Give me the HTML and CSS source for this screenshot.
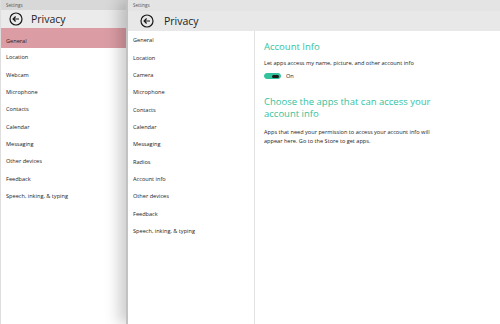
FILE: index.html
```html
<!DOCTYPE html>
<html>
<head lang="en">
    <meta charset="UTF-8">
    <title>Settings - Privacy</title>
    <link rel="stylesheet" href="styles.css">
</head>
<body>
    <div class="desk">
        <!-- window behind -->
        <div class="win back">
            <div class="titlebar">Settings</div>
            <div class="header">
                <svg class="backbtn" width="14" height="14" viewBox="0 0 14 14">
                    <circle cx="7" cy="7" r="6" fill="none" stroke="#1a1a1a" stroke-width="1.2"/>
                    <path d="M10 7H4.2M6.6 4.5L4.1 7l2.5 2.5" fill="none" stroke="#1a1a1a" stroke-width="1.2"/>
                </svg>
                <span class="title">Privacy</span>
            </div>
            <ul class="nav">
                <li class="active">General</li>
                <li>Location</li>
                <li>Webcam</li>
                <li>Microphone</li>
                <li>Contacts</li>
                <li>Calendar</li>
                <li>Messaging</li>
                <li>Other devices</li>
                <li>Feedback</li>
                <li>Speech, inking, &amp; typing</li>
            </ul>
        </div>

        <!-- window in front -->
        <div class="win front">
            <div class="titlebar">Settings</div>
            <div class="header">
                <svg class="backbtn" width="14" height="14" viewBox="0 0 14 14">
                    <circle cx="7" cy="7" r="6" fill="none" stroke="#1a1a1a" stroke-width="1.2"/>
                    <path d="M10 7H4.2M6.6 4.5L4.1 7l2.5 2.5" fill="none" stroke="#1a1a1a" stroke-width="1.2"/>
                </svg>
                <span class="title">Privacy</span>
            </div>
            <div class="body">
                <ul class="nav">
                    <li>General</li>
                    <li>Location</li>
                    <li>Camera</li>
                    <li>Microphone</li>
                    <li>Contacts</li>
                    <li>Calendar</li>
                    <li>Messaging</li>
                    <li>Radios</li>
                    <li>Account info</li>
                    <li>Other devices</li>
                    <li>Feedback</li>
                    <li>Speech, inking, &amp; typing</li>
                </ul>
                <div class="content">
                    <h2>Account Info</h2>
                    <p class="label">Let apps access my name, picture, and other account info</p>
                    <div class="toggle-row">
                        <span class="toggle"><span class="knob"></span></span>
                        <span>On</span>
                    </div>
                    <h2 class="second">Choose the apps that can access your account info</h2>
                    <p class="desc">Apps that need your permission to access your account info will appear here. Go to the Store to get apps.</p>
                </div>
            </div>
        </div>
    </div>
</body>
</html>
```

FILE: styles.css
```css
* {
    margin: 0;
    padding: 0;
    box-sizing: border-box;
}
html, body {
    width: 500px;
    height: 324px;
    overflow: hidden;
    background: #fff;
}
body {
    font-family: "Open Sans", "Noto Sans", sans-serif;
    color: #222;
}
.desk {
    display: flex;
    height: 324px;
}
.win {
    display: flex;
    flex-direction: column;
    background: #fff;
}
.back {
    width: 126px;
    border-left: 1px solid #dedede;
}
.front {
    flex: 1;
    border-left: 2px solid #c2c2c2;
    box-shadow: -7px 0 14px rgba(0, 0, 0, 0.2);
    z-index: 1;
}
.titlebar {
    height: 10px;
    padding-left: 5px;
    font-size: 4.5px;
    line-height: 10px;
    color: #555;
}
.back .titlebar {
    background: #d8d8d8;
}
.front .titlebar {
    height: 11px;
    line-height: 11px;
    background: #e4e4e4;
}
.header {
    display: flex;
    align-items: center;
    background: #ebebeb;
}
.back .header {
    height: 18px;
    padding-left: 8px;
}
.front .header {
    height: 20px;
    padding-left: 12px;
    background: #e8e8e8;
}
.backbtn {
    flex: none;
}
.title {
    font-size: 10.5px;
    margin-left: 8px;
    color: #222;
}
.front .title {
    margin-left: 10px;
}
.nav {
    list-style: none;
}
.nav li {
    height: 17.33px;
    line-height: 17.33px;
    padding-left: 5px;
    font-size: 5.6px;
    color: #222;
    white-space: nowrap;
}
.nav li.active {
    height: 20px;
    line-height: 26px;
    margin-bottom: 1.33px;
    background: #dc9ca4;
}
.body {
    flex: 1;
    display: flex;
}
.front .nav {
    width: 127px;
    padding-top: 1.33px;
    border-right: 1px solid #e3e3e3;
}
.content {
    flex: 1;
    padding: 10px 0 0 9px;
}
h2 {
    font-size: 9.5px;
    line-height: 12px;
    font-weight: normal;
    color: #33c29e;
}
h2.second {
    margin-top: 15.5px;
    line-height: 12.5px;
    max-width: 172px;
}
p {
    font-size: 5.6px;
    line-height: 9px;
    color: #222;
}
.label {
    margin-top: 6px;
}
.toggle-row {
    display: flex;
    align-items: center;
    height: 8px;
    margin-top: 4px;
    font-size: 5.6px;
    gap: 5px;
}
.toggle {
    display: flex;
    align-items: center;
    justify-content: flex-end;
    width: 17px;
    height: 6px;
    padding: 0 1.5px;
    border: 1px solid #33c29e;
    border-radius: 3px;
    background: #33c29e;
}
.knob {
    width: 7px;
    height: 3px;
    border-radius: 1.5px;
    background: #1a1a1a;
}
.desc {
    margin-top: 7px;
    max-width: 176px;
}
```
